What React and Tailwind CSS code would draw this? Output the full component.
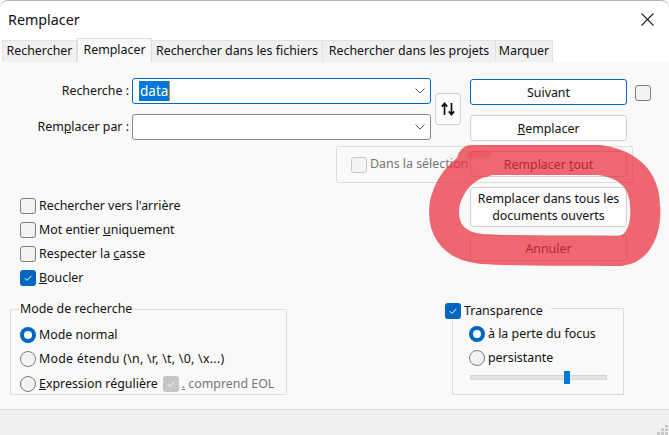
import React from "react";

const font = { fontFamily: '"Noto Sans", "Open Sans", sans-serif' };

function Check({ checked, disabled, className = "" }) {
  if (checked) {
    return (
      <span className={`flex w-4 h-4 shrink-0 items-center justify-center rounded-[3px] ${disabled ? "bg-[#c6c6c6]" : "bg-[#0067c0]"} ${className}`}>
        <svg width="10" height="10" viewBox="0 0 10 10" fill="none">
          <path d="M1.8 5.2 L4 7.4 L8.4 2.8" stroke="white" strokeWidth="1" />
        </svg>
      </span>
    );
  }
  return <span className={`block w-4 h-4 shrink-0 rounded-[3px] border ${disabled ? "border-[#c8c8c8] bg-[#f4f4f4]" : "border-[#7d7d7d] bg-[#f3f3f3]"} ${className}`} />;
}

function Radio({ checked }) {
  if (checked) {
    return (
      <span className="flex w-4 h-4 shrink-0 items-center justify-center rounded-full bg-[#0067c0]">
        <span className="block w-2 h-2 rounded-full bg-white" />
      </span>
    );
  }
  return <span className="block w-4 h-4 shrink-0 rounded-full border border-[#7d7d7d] bg-[#f3f3f3]" />;
}

function Opt({ control, children }) {
  return (
    <div className="flex items-center h-4 gap-[3px] whitespace-nowrap">
      {control}
      <span>{children}</span>
    </div>
  );
}

function Chevron() {
  return (
    <svg width="10" height="6" viewBox="0 0 10 6" fill="none" className="shrink-0">
      <path d="M0.5 0.5 L5 5 L9.5 0.5" stroke="#555" strokeWidth="1" />
    </svg>
  );
}

function Combo({ focused, children }) {
  return (
    <div className={`flex items-center w-[299px] h-[26px] pl-[6px] pr-[5px] rounded-[3px] bg-white border ${focused ? "border-[#0067c0]" : "border-[#8a8a8a]"}`}>
      <div className="flex-1 min-w-0 text-[13.5px]">{children}</div>
      <Chevron />
    </div>
  );
}

function Btn({ primary, className = "", children }) {
  return (
    <div className={`flex items-center justify-center w-[157px] rounded-[3px] bg-[#fdfdfd] text-center leading-[17px] border ${primary ? "border-[#0067c0]" : "border-[#d0d0d0]"} ${className}`}>
      <span>{children}</span>
    </div>
  );
}

export default function App() {
  return (
    <div style={font} className="relative w-[669px] h-[435px] overflow-hidden flex flex-col rounded-t-[8px] border-t border-[#b4b4b4] bg-white text-[12.4px] text-[#111]">
      {/* title bar */}
      <div className="flex items-center justify-between h-[37px] shrink-0 pl-2 pr-[15px]">
        <span className="text-[14.3px]">Remplacer</span>
        <svg width="13" height="13" viewBox="0 0 13 13" fill="none">
          <path d="M0.5 0.5 L12.5 12.5 M12.5 0.5 L0.5 12.5" stroke="#222" strokeWidth="1.1" />
        </svg>
      </div>

      {/* tabs */}
      <div className="flex items-end h-[24px] shrink-0 pl-[2px] bg-white relative z-10 -mb-px">
        <div className="flex items-center justify-center w-[75px] h-[22px] border border-b-0 border-[#e2e2e2] bg-[#f0f0f0]">Rechercher</div>
        <div className="flex items-center justify-center w-[75px] h-[24px] pb-[1px] border border-b-0 border-[#dcdcdc] bg-[#f9f9f9]">Remplacer</div>
        <div className="flex items-center justify-center w-[171px] h-[22px] border-t border-r border-[#e2e2e2] bg-[#f0f0f0]">Rechercher dans les fichiers</div>
        <div className="flex items-center justify-center w-[173px] h-[22px] border-r border-t border-[#e2e2e2] bg-[#f0f0f0]">Rechercher dans les projets</div>
        <div className="flex items-center justify-center w-[57px] h-[22px] border-r border-t border-[#e2e2e2] bg-[#f0f0f0]">Marquer</div>
      </div>

      {/* body */}
      <div className="flex-1 flex flex-col bg-[#f9f9f9] border-t border-[#e2e2e2] pt-[16px] min-h-0">
        <div className="flex h-[229px] shrink-0">
          {/* left column */}
          <div className="w-[470px] shrink-0 flex flex-col">
            <div className="flex">
              <div className="flex flex-col gap-[10px]">
                <div className="flex items-center gap-[3px]">
                  <span className="w-[129px] text-right whitespace-nowrap">Recherche :</span>
                  <Combo focused>
                    <span className="bg-[#0078d7] text-white px-[1px] py-px border-r border-[#e8862a]">data</span>
                  </Combo>
                </div>
                <div className="flex items-center gap-[3px]">
                  <span className="w-[129px] text-right whitespace-nowrap">Rem<u>p</u>lacer par :</span>
                  <Combo />
                </div>
              </div>
              <div className="flex items-center justify-center w-[26px] h-[32px] ml-[4px] mt-[15px] rounded-[3px] border border-[#d0d0d0] bg-[#fdfdfd]">
                <svg width="14" height="14" viewBox="0 0 14 14" fill="none" stroke="#111" strokeWidth="1.7">
                  <path d="M3.5 13 V1.5 M0.8 4.6 L3.5 1.4 L6.2 4.6" />
                  <path d="M10.5 1 V12.5 M7.8 9.4 L10.5 12.6 L13.2 9.4" />
                </svg>
              </div>
            </div>
            <div className="w-[297px] h-[37px] ml-[336px] mt-[6px] flex items-center pl-[14px] gap-[3px] rounded-[2px] border border-[#dcdcdc] text-[#767676] whitespace-nowrap">
              <Check disabled />
              <span>Dans la sélection</span>
            </div>
            <div className="flex flex-col gap-2 pl-5 mt-[15px]">
              <Opt control={<Check />}>Rechercher vers l'arrière</Opt>
              <Opt control={<Check />}>Mot entier <u>u</u>niquement</Opt>
              <Opt control={<Check />}>Respecter la <u>c</u>asse</Opt>
              <Opt control={<Check checked />}><u>B</u>oucler</Opt>
            </div>
          </div>

          {/* right column */}
          <div className="relative z-[1] flex flex-col gap-[10px] pt-px">
            <Btn primary className="h-[26px]">Suivant</Btn>
            <Btn className="h-[26px]"><u>R</u>emplacer</Btn>
            <Btn className="h-[26px]">Remplacer <u>t</u>out</Btn>
            <Btn className="h-[40px]">Remplacer dans tous les<br />documents ouverts</Btn>
            <Btn className="h-[26px] -mt-[2px]">Annuler</Btn>
          </div>
          <div className="ml-2 mt-[7px]"><Check /></div>
        </div>

        {/* group boxes */}
        <div className="flex mt-[1px] shrink-0">
          <fieldset className="w-[277px] h-[94px] ml-[10px] -mt-[7px] border border-[#dcdcdc] pl-[9px] pr-0 rounded-[1px]">
            <legend className="px-[1px] leading-[16px] ml-[-1px]">Mode de recherche</legend>
            <div className="flex flex-col gap-2 mt-[10px]">
              <Opt control={<Radio checked />}>Mode normal</Opt>
              <Opt control={<Radio />}><span className="tracking-[0.25px]">Mode étendu (\n, \r, \t, \0, \x...)</span></Opt>
              <div className="flex items-center">
                <Opt control={<Radio />}><u>E</u>xpression régulière</Opt>
                <Check checked disabled className="ml-[5px]" />
                <span className="ml-[3px] text-[#767676] whitespace-nowrap"><u>.</u> comprend EOL</span>
              </div>
            </div>
          </fieldset>
          <div className="relative w-[172px] h-[87px] ml-[165px] border border-[#dcdcdc] pl-[16px] pt-[17px]">
            <div className="absolute -left-[8px] -top-[6px] flex items-center gap-[3px] h-4 pr-2 bg-[#f9f9f9]">
              <Check checked />
              <span>Transparence</span>
            </div>
            <div className="flex flex-col gap-2">
              <Opt control={<Radio checked />}>à la perte du focus</Opt>
              <Opt control={<Radio />}>persistante</Opt>
            </div>
            <div className="relative w-[137px] h-[5px] mt-[9px] ml-px bg-[#e2e3e4] border border-[#d6d6d6]">
              <span className="absolute left-[93px] -top-[5px] block w-[6px] h-[13px] bg-[#0078d7]" />
            </div>
          </div>
        </div>
      </div>

      {/* footer */}
      <div className="relative h-[26px] shrink-0 bg-[#f0f0f0] border-t border-[#dcdcdc]">
        <svg className="absolute right-0 bottom-0" width="13" height="10" viewBox="0 0 13 10" fill="#c8c8c8">
          <rect x="9" y="0" width="3" height="2.5" />
          <rect x="5" y="3.5" width="3" height="2.5" /><rect x="9" y="3.5" width="3" height="2.5" />
          <rect x="1" y="7" width="3" height="3" /><rect x="5" y="7" width="3" height="3" /><rect x="9" y="7" width="3" height="3" />
        </svg>
      </div>

      {/* red highlighter annotation */}
      <svg className="absolute left-0 -top-px z-20 pointer-events-none blur-[0.6px]" width="669" height="435" viewBox="0 0 669 435" fill="none">
        <path
          d="M484 162 C468 165 451 179 445 202 C441 226 450 246 482 249 C530 252 590 250 620 251 C640 249 647 226 645 205 C644 182 632 165 600 160 C555 160 510 160 472 160"
          stroke="#e8323f"
          strokeOpacity="0.74"
          strokeWidth="30"
          strokeLinecap="round"
          strokeLinejoin="round"
        />
        <path d="M470 155 C476 154 482 154 488 154" stroke="#e8323f" strokeOpacity="0.2" strokeWidth="7" strokeLinecap="round" />
      </svg>
    </div>
  );
}
